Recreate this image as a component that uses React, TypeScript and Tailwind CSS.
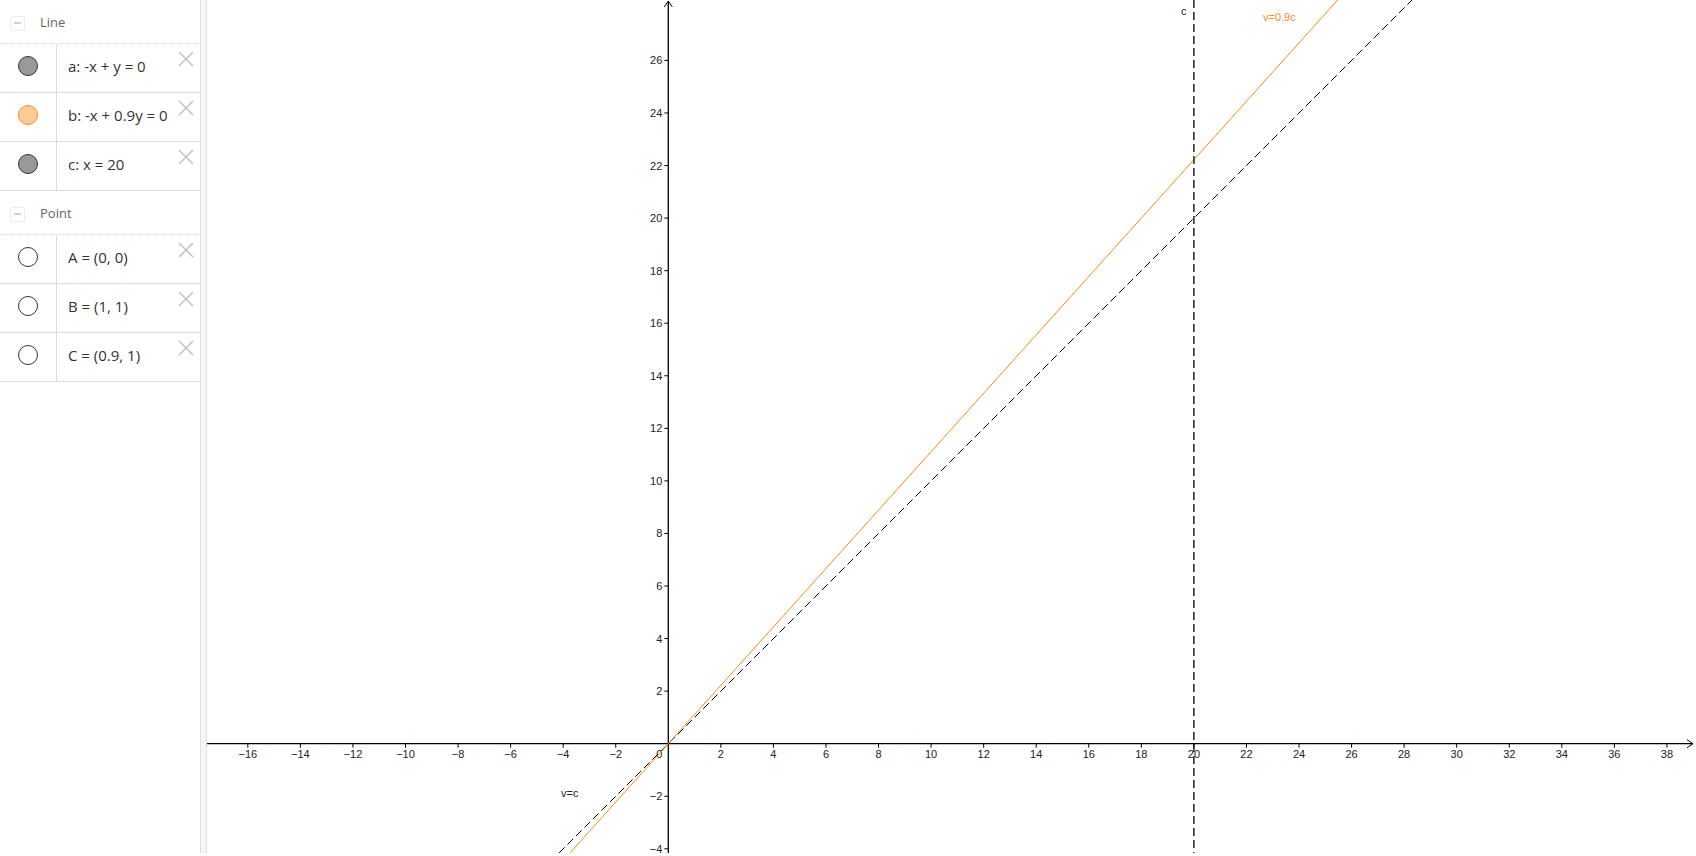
import React from "react";

type Item = { label: string; fill: string; stroke: string };

const groups: { name: string; items: Item[] }[] = [
  {
    name: "Line",
    items: [
      { label: "a: -x + y = 0", fill: "#999999", stroke: "#333333" },
      { label: "b: -x + 0.9y = 0", fill: "#ffcc99", stroke: "#ff8a1f" },
      { label: "c: x = 20", fill: "#999999", stroke: "#333333" },
    ],
  },
  {
    name: "Point",
    items: [
      { label: "A = (0, 0)", fill: "#ffffff", stroke: "#333333" },
      { label: "B = (1, 1)", fill: "#ffffff", stroke: "#333333" },
      { label: "C = (0.9, 1)", fill: "#ffffff", stroke: "#333333" },
    ],
  },
];

const W = 1489;
const H = 853;
const OX = 461.3;
const OY = 743.7;
const U = 26.28;

const sx = (x: number) => OX + x * U;
const sy = (y: number) => OY - y * U;
const fmt = (n: number) => (n < 0 ? "\u2212" + Math.abs(n) : String(n));

function Row({ item }: { item: Item }) {
  return (
    <div className="relative flex h-[49px] border-b border-[#dcdcdc]">
      <div className="flex w-[57px] shrink-0 items-center justify-center border-r border-[#dcdcdc] pb-[4px]">
        <span
          className="block h-[20px] w-[20px] rounded-full border"
          style={{ background: item.fill, borderColor: item.stroke }}
        />
      </div>
      <div className="flex items-center pb-[4px] pl-[11px] text-[15px] text-[#333]">
        {item.label}
      </div>
      <svg className="absolute right-[6px] top-[7px]" width="16" height="16" viewBox="0 0 16 16">
        <path d="M1 1L15 15M15 1L1 15" stroke="#c4c4c4" strokeWidth="1.6" />
      </svg>
    </div>
  );
}

function Header({ name }: { name: string }) {
  return (
    <div className="flex h-[44px] items-center border-b border-dotted border-[#d6d6d6] pt-[3px]">
      <div className="ml-[10px] flex h-[15px] w-[15px] items-center justify-center rounded-[2px] border border-[#ececec]">
        <span className="block h-[1.5px] w-[7px] bg-[#cfcfcf]" />
      </div>
      <span className="ml-[15px] text-[13px] text-[#666]">{name}</span>
    </div>
  );
}

function Graph() {
  const xs: number[] = [];
  for (let i = -16; i <= 38; i += 2) if (i !== 0) xs.push(i);
  const ys: number[] = [];
  for (let i = -4; i <= 26; i += 2) if (i !== 0) ys.push(i);

  const yTop = OY / U;
  const yBot = (OY - H) / U;

  return (
    <svg width={W} height={H} className="block" style={{ fontFamily: "'Liberation Sans', Arial, sans-serif" }}>
      {/* axes */}
      <line x1={0} y1={OY} x2={W - 3} y2={OY} stroke="#000" strokeWidth="1.3" />
      <path d={`M${W - 9} ${OY - 4}L${W - 3} ${OY}L${W - 9} ${OY + 4}`} fill="none" stroke="#000" strokeWidth="1" />
      <line x1={OX} y1={1} x2={OX} y2={H} stroke="#000" strokeWidth="1.3" />
      <path d={`M${OX - 4} 7L${OX} 1L${OX + 4} 7`} fill="none" stroke="#000" strokeWidth="1" />

      {xs.map((x) => (
        <g key={"x" + x}>
          <line x1={sx(x)} y1={OY} x2={sx(x)} y2={OY + 4} stroke="#000" strokeWidth="1" />
          <text x={sx(x)} y={OY + 14.5} fontSize="11" textAnchor="middle" fill="#222">
            {fmt(x)}
          </text>
        </g>
      ))}
      {ys.map((y) => (
        <g key={"y" + y}>
          <line x1={OX - 4} y1={sy(y)} x2={OX} y2={sy(y)} stroke="#000" strokeWidth="1" />
          <text x={OX - 6} y={sy(y) + 4} fontSize="11" textAnchor="end" fill="#222">
            {fmt(y)}
          </text>
        </g>
      ))}
      <text x={OX - 6} y={OY + 14.5} fontSize="11" textAnchor="end" fill="#222">
        0
      </text>

      {/* a: y = x */}
      <line
        x1={sx(yBot)}
        y1={H}
        x2={sx(yTop)}
        y2={0}
        stroke="#000"
        strokeWidth="1"
        strokeDasharray="8 4"
      />
      {/* b: y = x / 0.9 */}
      <line
        x1={sx(yBot * 0.9)}
        y1={H}
        x2={sx(yTop * 0.9)}
        y2={0}
        stroke="#ff8a1f"
        strokeWidth="1"
      />
      {/* c: x = 20 */}
      <line x1={sx(20)} y1={0} x2={sx(20)} y2={H} stroke="#000" strokeWidth="1.3" strokeDasharray="8 4" />

      <text x={sx(20) - 13} y={15} fontSize="11" fill="#222">
        c
      </text>
      <text x={1263 - 207} y={21} fontSize="11" fill="#ff8a1f">
        v=0.9c
      </text>
      <text x={561 - 207} y={797} fontSize="11" fill="#222">
        v=c
      </text>
    </svg>
  );
}

export default function App() {
  return (
    <div className="flex h-[856px] w-[1696px] overflow-hidden bg-white" style={{ fontFamily: "'Open Sans', 'Noto Sans', sans-serif" }}>
      <div className="h-[853px] w-[200px] shrink-0 bg-white">
        {groups.map((g) => (
          <div key={g.name}>
            <Header name={g.name} />
            {g.items.map((it) => (
              <Row key={it.label} item={it} />
            ))}
          </div>
        ))}
      </div>
      <div className="h-[853px] w-[7px] shrink-0 border-x border-[#dedede] bg-[#f5f5f5]" />
      <div className="h-[853px] flex-1">
        <Graph />
      </div>
    </div>
  );
}
